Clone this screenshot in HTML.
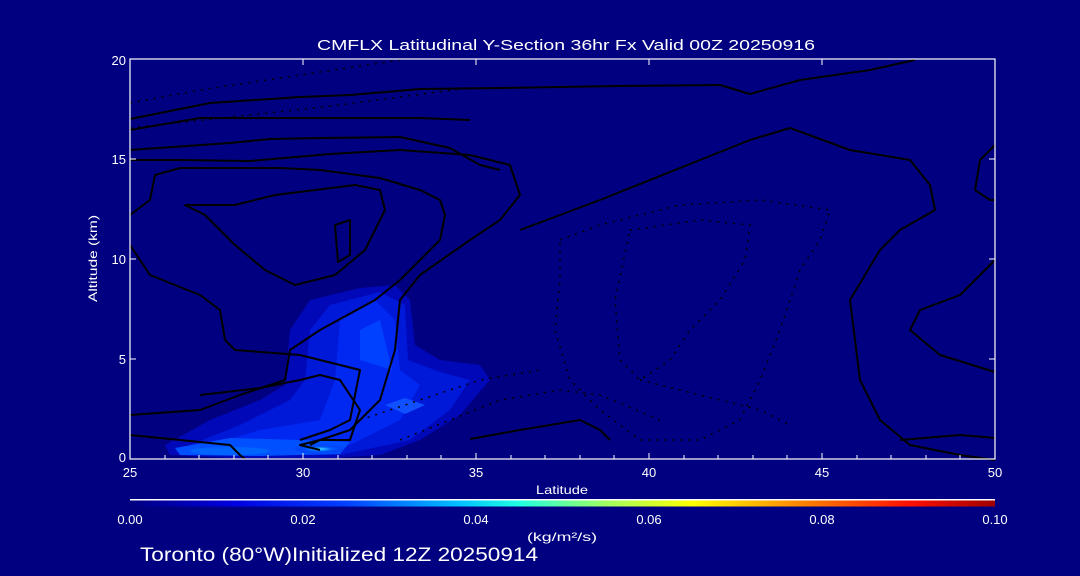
<!DOCTYPE html>
<html><head><style>
html,body{margin:0;padding:0;background:#000080;width:1080px;height:576px;overflow:hidden}
svg{display:block}
text{font-family:"Liberation Sans",sans-serif;fill:#fff}
</style></head><body>
<svg width="1080" height="576" viewBox="0 0 1080 576" xmlns="http://www.w3.org/2000/svg">
<defs>
<linearGradient id="cb" x1="0" x2="1">
<stop offset="0" stop-color="#000080"/><stop offset="0.12" stop-color="#0000e0"/>
<stop offset="0.25" stop-color="#0040ff"/><stop offset="0.38" stop-color="#00c0ff"/>
<stop offset="0.45" stop-color="#20ffe0"/><stop offset="0.55" stop-color="#a0ff60"/>
<stop offset="0.65" stop-color="#ffff00"/><stop offset="0.78" stop-color="#ff8000"/>
<stop offset="0.9" stop-color="#ff1000"/><stop offset="1" stop-color="#a00000"/>
</linearGradient>
<radialGradient id="hot" cx="0.5" cy="0.5" r="0.5"><stop offset="0" stop-color="#40e0ff"/><stop offset="0.4" stop-color="#0060ff"/><stop offset="1" stop-color="#0020e0" stop-opacity="0"/></radialGradient>
</defs>
<rect width="1080" height="576" fill="#000080"/>
<g>
<path d="M290,330 L310,300 L360,288 L395,285 L410,300 L415,345 L440,360 L480,365 L490,380 L460,415 L420,440 L380,455 L330,458 L230,458 L170,455 L165,445 L210,420 L260,400 L285,385 Z" fill="#0008b8"/>
<path d="M310,330 L330,305 L380,292 L405,305 L408,360 L440,372 L470,380 L450,410 L410,440 L340,455 L200,455 L190,445 L240,425 L290,400 L305,380 Z" fill="#0018d8"/>
<path d="M340,320 L375,300 L395,320 L400,370 L420,385 L400,420 L350,445 L230,452 L210,445 L260,430 L320,420 L335,380 Z" fill="#0028f0"/>
<path d="M360,330 L380,320 L392,370 L360,360 Z" fill="#0040ff"/>
<path d="M385,405 L405,398 L425,405 L405,414 Z" fill="#1050ff"/>
<path d="M175,448 L230,438 L300,440 L350,442 L340,454 L260,456 L180,455 Z" fill="#0050ff"/>
<ellipse cx="320" cy="449" rx="28" ry="5" fill="url(#hot)"/>
<ellipse cx="230" cy="451" rx="40" ry="4" fill="#0064ff"/>
</g>
<g fill="none" stroke="#000" stroke-width="2" stroke-linejoin="round">
<path d="M130,119 L210,103 L300,97 L350,95 L420,89 L500,88 L620,86 L720,85 L750,94 L800,80 L870,70 L915,60"/>
<path d="M130,130 L200,118 L300,118 L420,118 L470,120"/>
<path d="M130,150 L230,143 L270,139 L320,138 L400,137 L450,148 L480,165 L500,170"/>
<path d="M130,160 L180,160 L250,161 L330,154 L400,150 L470,155 L510,165 L520,195 L500,220 L470,240 L420,275 L400,300 L395,350 L380,400 L350,430 L320,440 L310,445"/>
<path d="M130,215 L150,200 L155,175 L180,168 L230,168 L280,168 L320,170 L380,178 L420,190 L440,200 L445,215 L440,240 L420,260 L400,280 L375,300 L320,330 L290,350 L285,380 L240,395 L200,410 L130,415"/>
<path d="M185,205 L205,215 L235,245 L265,270 L295,285 L335,275 L365,250 L385,210 L380,190 L355,185 L315,190 L275,195 L235,205 Z"/>
<path d="M335,225 L350,220 L350,255 L338,262 Z"/>
<path d="M130,245 L150,275 L200,295 L220,310 L225,340 L235,350 L300,355 L320,360 L340,365 L360,370 L350,420 L330,430 L300,440"/>
<path d="M520,230 L560,215 L600,200 L700,160 L750,140 L790,128 L850,150 L910,160 L930,185 L935,210 L900,230 L880,250 L850,300 L860,380 L880,420 L910,445 L960,455 L995,460"/>
<path d="M995,145 L980,160 L975,190 L990,200 L995,200"/>
<path d="M995,260 L960,295 L920,310 L910,330 L940,355 L995,372"/>
<path d="M130,435 L180,440 L230,445 L240,455 L245,459"/>
<path d="M200,395 L260,388 L300,380 L320,375 L340,380 L360,410 L350,440 L320,440 L300,445 L320,450"/>
<path d="M470,439 L520,430 L580,420 L600,430 L610,440"/>
<path d="M900,440 L960,435 L995,438"/>
</g>
<g fill="none" stroke="#000" stroke-width="1.5" stroke-dasharray="2,6">
<path d="M130,103 L200,90 L300,75 L400,60"/>
<path d="M130,128 L250,115 L340,105 L460,89"/>
<path d="M560,240 L600,225 L680,205 L760,200 L830,210 L820,240 L800,270 L780,330 L760,380 L740,420 L700,440 L640,440 L600,410 L570,380 L555,330 L560,280 Z"/>
<path d="M630,230 L700,220 L750,225 L745,260 L720,300 L690,330 L670,360 L640,380 L620,360 L615,300 Z"/>
<path d="M400,440 L450,420 L500,400 L560,390 L600,395 L660,420"/>
<path d="M360,420 L420,400 L480,380 L540,370"/>
<path d="M640,380 L680,390 L720,400 L760,410 L790,425"/>
</g>
<g stroke="#fff" stroke-width="1.2" fill="none">
<rect x="130" y="59" width="865" height="400"/>
</g>
<g stroke="#fff" stroke-width="1">
<path d="M130,459v-6M165,459v-4M199,459v-4M234,459v-4M268,459v-4M303,459v-6M338,459v-4M372,459v-4M407,459v-4M441,459v-4M476,459v-6M511,459v-4M545,459v-4M580,459v-4M614,459v-4M649,459v-6M684,459v-4M718,459v-4M753,459v-4M787,459v-4M822,459v-6M857,459v-4M891,459v-4M926,459v-4M960,459v-4M995,459v-6"/>
<path d="M130,59v6M303,59v6M476,59v6M649,59v6M822,59v6M995,59v6"/>
<path d="M130,359h6M130,259h6M130,159h6M989,359h6M989,259h6M989,159h6"/>
</g>
<g font-size="13" text-anchor="middle">
<text x="130" y="477">25</text><text x="303" y="477">30</text><text x="476" y="477">35</text>
<text x="649" y="477">40</text><text x="822" y="477">45</text><text x="995" y="477">50</text>
</g>
<text x="536" y="494" font-size="12" textLength="52" lengthAdjust="spacingAndGlyphs">Latitude</text>
<g font-size="13" text-anchor="end">
<text x="126" y="65">20</text><text x="126" y="164">15</text><text x="126" y="264">10</text>
<text x="126" y="364">5</text><text x="126" y="462">0</text>
</g>
<text x="0" y="0" font-size="12" textLength="87" lengthAdjust="spacingAndGlyphs" transform="translate(97,302) rotate(-90)">Altitude (km)</text>
<text x="317" y="50" font-size="15" textLength="498" lengthAdjust="spacingAndGlyphs">CMFLX Latitudinal Y-Section 36hr  Fx Valid 00Z 20250916</text>
<rect x="130" y="499" width="865" height="1.5" fill="#fff"/>
<rect x="130" y="500.5" width="865" height="6" fill="url(#cb)"/>
<g font-size="13" text-anchor="middle">
<text x="130" y="524">0.00</text><text x="303" y="524">0.02</text><text x="476" y="524">0.04</text>
<text x="649" y="524">0.06</text><text x="822" y="524">0.08</text><text x="995" y="524">0.10</text>
</g>
<text x="527" y="541" font-size="12" textLength="70" lengthAdjust="spacingAndGlyphs">(kg/m²/s)</text>
<text x="140" y="561" font-size="19" textLength="398" lengthAdjust="spacingAndGlyphs">Toronto (80°W)Initialized 12Z 20250914</text>
</svg>
</body></html>
